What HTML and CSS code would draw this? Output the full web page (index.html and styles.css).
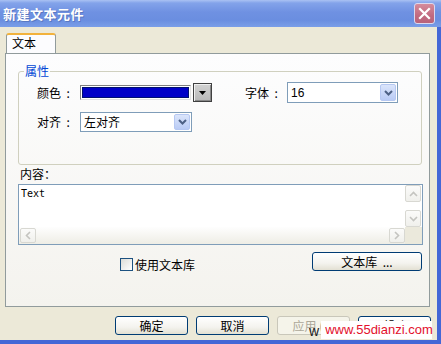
FILE: index.html
```html
<!DOCTYPE html>
<html lang="zh-CN">
<head>
<meta charset="utf-8">
<title>新建文本元件</title>
<link rel="stylesheet" href="styles.css">
</head>
<body>
<div class="win">
  <div class="titlebar">
    <span class="title">新建文本元件</span>
    <span class="close"><svg width="13" height="13" viewBox="0 0 13 13"><path d="M2 2 L11 11 M11 2 L2 11" stroke="#fff" stroke-width="2.2" stroke-linecap="square"/></svg></span>
  </div>
  <div class="client">
    <div class="tabs"><div class="tab">文本</div></div>
    <div class="panel">
      <fieldset class="group">
        <legend>属性</legend>
        <div class="row row1">
          <span class="lbl">颜色&nbsp;&nbsp;:</span>
          <div class="colorbox"><div class="swatch"></div></div>
          <div class="colorbtn"><svg width="7" height="4" viewBox="0 0 7 4"><path d="M0 0 H7 L3.5 4 Z" fill="#000"/></svg></div>
          <span class="lbl lbl-font">字体&nbsp;&nbsp;:</span>
          <div class="combo combo-font"><span class="val">16</span><span class="drop"><svg width="9" height="6" viewBox="0 0 9 6"><path d="M1 1 L4.5 4.5 L8 1" fill="none" stroke="#4d6185" stroke-width="2"/></svg></span></div>
        </div>
        <div class="row row2">
          <span class="lbl">对齐&nbsp;&nbsp;:</span>
          <div class="combo combo-align"><span class="val">左对齐</span><span class="drop"><svg width="9" height="6" viewBox="0 0 9 6"><path d="M1 1 L4.5 4.5 L8 1" fill="none" stroke="#4d6185" stroke-width="2"/></svg></span></div>
        </div>
      </fieldset>
      <div class="content-label">内容：</div>
      <div class="editor">
        <div class="text">Text</div>
        <div class="vscroll">
          <span class="sbtn"><svg width="9" height="6" viewBox="0 0 9 6"><path d="M1 5 L4.5 1.5 L8 5" fill="none" stroke="#c4c4c0" stroke-width="1.6"/></svg></span>
          <span class="strack"></span>
          <span class="sbtn"><svg width="9" height="6" viewBox="0 0 9 6"><path d="M1 1 L4.5 4.5 L8 1" fill="none" stroke="#c4c4c0" stroke-width="1.6"/></svg></span>
        </div>
        <div class="hscroll">
          <span class="sbtn"><svg width="6" height="9" viewBox="0 0 6 9"><path d="M5 1 L1.5 4.5 L5 8" fill="none" stroke="#c4c4c0" stroke-width="1.6"/></svg></span>
          <span class="strack"></span>
          <span class="sbtn"><svg width="6" height="9" viewBox="0 0 6 9"><path d="M1 1 L4.5 4.5 L1 8" fill="none" stroke="#c4c4c0" stroke-width="1.6"/></svg></span>
        </div>
        <div class="corner"></div>
      </div>
      <div class="lib-row">
        <label class="check"><span class="box"></span><span>使用文本库</span></label>
        <button class="btn btn-lib">文本库&nbsp;&nbsp;...</button>
      </div>
    </div>
    <div class="buttons">
      <button class="btn">确定</button>
      <button class="btn">取消</button>
      <button class="btn disabled">应用 (A)</button>
      <button class="btn">帮助</button>
    </div>
  </div>
  <div class="watermark"><span class="wm-w">w</span><span class="wm-box">www.55dianzi.com</span></div>
</div>
</body>
</html>
```

FILE: styles.css
```css
* { box-sizing: border-box; }
html, body { margin: 0; padding: 0; }
body {
  width: 441px; height: 344px; overflow: hidden;
  background: #ece9d8;
  font-family: "Noto Sans CJK SC", "Liberation Sans", sans-serif;
  font-size: 12px; color: #000;
}
.win { position: relative; width: 441px; height: 344px; display: flex; flex-direction: column; }
.titlebar {
  height: 27px; flex: none;
  display: flex; align-items: center; justify-content: space-between;
  padding: 0 6px 0 3px;
  background: linear-gradient(#aac2f3 0, #83a3ea 3px, #6f91e2 45%, #6a8ee0 75%, #7a9ee8 100%);
}
.title { color: #fff; font-weight: bold; font-size: 13px; line-height: 16px; text-shadow: 1px 1px 0 #5a78c0; letter-spacing: 0.5px; }
.close {
  width: 21px; height: 21px; border-radius: 3px;
  border: 1px solid #dcd8ee;
  background: linear-gradient(#d58c9c, #c26a80 60%, #b8627a);
  display: flex; align-items: center; justify-content: center;
}
.client {
  flex: 1; display: flex; flex-direction: column;
  border-right: 4px solid #4467d6; border-bottom: 4px solid #4467d6;
}
.tabs { padding: 6px 0 0 6px; height: 26px; display: flex; flex: none; }
.tab {
  position: relative; z-index: 1;
  width: 50px; height: 20px;
  border: 1px solid #919b9c; border-bottom: none;
  border-top: 2px solid #f2b23c;
  border-radius: 3px 3px 0 0;
  background: #fcfcfe;
  padding: 1px 0 0 5px; line-height: 14px;
  margin-bottom: -1px;
}
.panel {
  margin-left: 5px; width: 425px; height: 254px; flex: none;
  border: 1px solid #919b9c;
  background: linear-gradient(#fdfdfe, #f4f3ee);
  display: flex; flex-direction: column;
}
.group {
  margin: 10px 0 0 12px; width: 404px; height: 101px;
  border: 1px solid #d0d0bf; border-radius: 3px;
  padding: 4px 0 0 18px;
  min-width: 0;
}
.group legend { color: #0046d5; line-height: 14px; padding: 0 1px; margin-left: -13px; }
.row { display: flex; align-items: center; }
.row1 { height: 21px; }
.row2 { height: 20px; margin-top: 9px; }
.lbl { width: 43px; white-space: nowrap; line-height: 14px; }
.lbl-font { margin-left: 33px; width: 42px; }
.colorbox {
  width: 111px; height: 15px;
  border-top: 1px solid #808080; border-left: 1px solid #808080;
  border-right: 1px solid #e0e0e0; border-bottom: 1px solid #e0e0e0;
  background: #fff; padding: 1px;
}
.swatch { width: 100%; height: 100%; background: #0000c8; border: 1px solid #001070; }
.colorbtn {
  margin-left: 2px; width: 19px; height: 19px;
  border: 1px solid #404040;
  background: linear-gradient(#d2d2d2, #b8b8b8);
  box-shadow: inset 1px 1px 0 #f0f0f0, inset -1px -1px 0 #888;
  display: flex; align-items: center; justify-content: center;
}
.combo {
  display: flex; align-items: center; justify-content: space-between;
  border: 1px solid #7f9db9; background: #fff;
  padding: 0 1px 0 3px;
}
.combo .val { line-height: 14px; font-family: "Liberation Sans", "Noto Sans CJK SC", sans-serif; font-size: 12px; }
.row2 .combo .val { font-family: "Noto Sans CJK SC", sans-serif; }
.combo-font { width: 111px; height: 21px; }
.combo-align { width: 112px; height: 20px; }
.drop {
  width: 16px; height: 17px; border-radius: 2px;
  border: 1px solid #b6c8f2;
  background: linear-gradient(#dbe5fb, #b9cbf5);
  display: flex; align-items: center; justify-content: center;
}
.combo-align .drop { height: 16px; }
.content-label { margin: 2px 0 0 14px; line-height: 14px; }
.editor {
  margin: 3px 0 0 12px; width: 405px; height: 61px;
  border: 1px solid #7f9db9; background: #fff;
  display: grid; grid-template-columns: 1fr 17px; grid-template-rows: 1fr 17px;
}
.text { font-family: "DejaVu Sans Mono", "Liberation Mono", monospace; font-size: 10px; line-height: 12px; padding: 3px 0 0 2px; }
.vscroll { display: flex; flex-direction: column; padding: 0 1px 0 0; background: #fff; }
.hscroll { display: flex; padding: 1px 0 1px 1px; background: linear-gradient(#fefefe, #eeede5); }
.corner { background: #ebe9dc; }
.sbtn {
  flex: none; width: 16px; height: 16px;
  border: 1px solid #d8d8d2; border-radius: 2px;
  background: linear-gradient(#fbfbfa, #f0f0ec);
  display: flex; align-items: center; justify-content: center;
}
.vscroll .sbtn { height: 17px; }
.vscroll .strack { flex: 1; }
.hscroll .strack { flex: 1; }
.hscroll .sbtn { width: 16px; height: 15px; }
.lib-row { display: flex; align-items: flex-end; margin-top: 7px; height: 19px; padding-right: 7px; }
.check { display: flex; align-items: center; margin-left: 114px; line-height: 13px; }
.box { width: 13px; height: 13px; border: 1px solid #1c5180; background: linear-gradient(135deg, #dcdcd7, #fff); margin-right: 2px; }
.btn {
  font-family: "Noto Sans CJK SC", sans-serif; font-size: 12px; color: #000;
  height: 19px; width: 73px; padding: 0;
  border: 1px solid #003c74; border-radius: 3px;
  background: linear-gradient(#ffffff, #f4f3ee 60%, #e3e0d3);
  line-height: 15px;
}
.btn-lib { margin-left: auto; width: 110px; }
.buttons { display: flex; gap: 8px; margin-top: 9px; padding-left: 115px; }
.btn.disabled { color: #aca899; border-color: #c9c7ba; background: #f5f4ea; }
.watermark { position: absolute; left: 309px; top: 321px; display: flex; align-items: flex-end; }
.wm-w { font-family: "Liberation Sans", sans-serif; font-size: 14px; color: #222; line-height: 16px; margin-right: 2px; }
.wm-box {
  background: #fff; color: #e3102c; width: 111px; height: 18px;
  font-family: "Liberation Sans", sans-serif; font-size: 13px; line-height: 18px; padding-left: 4px;
}
```
